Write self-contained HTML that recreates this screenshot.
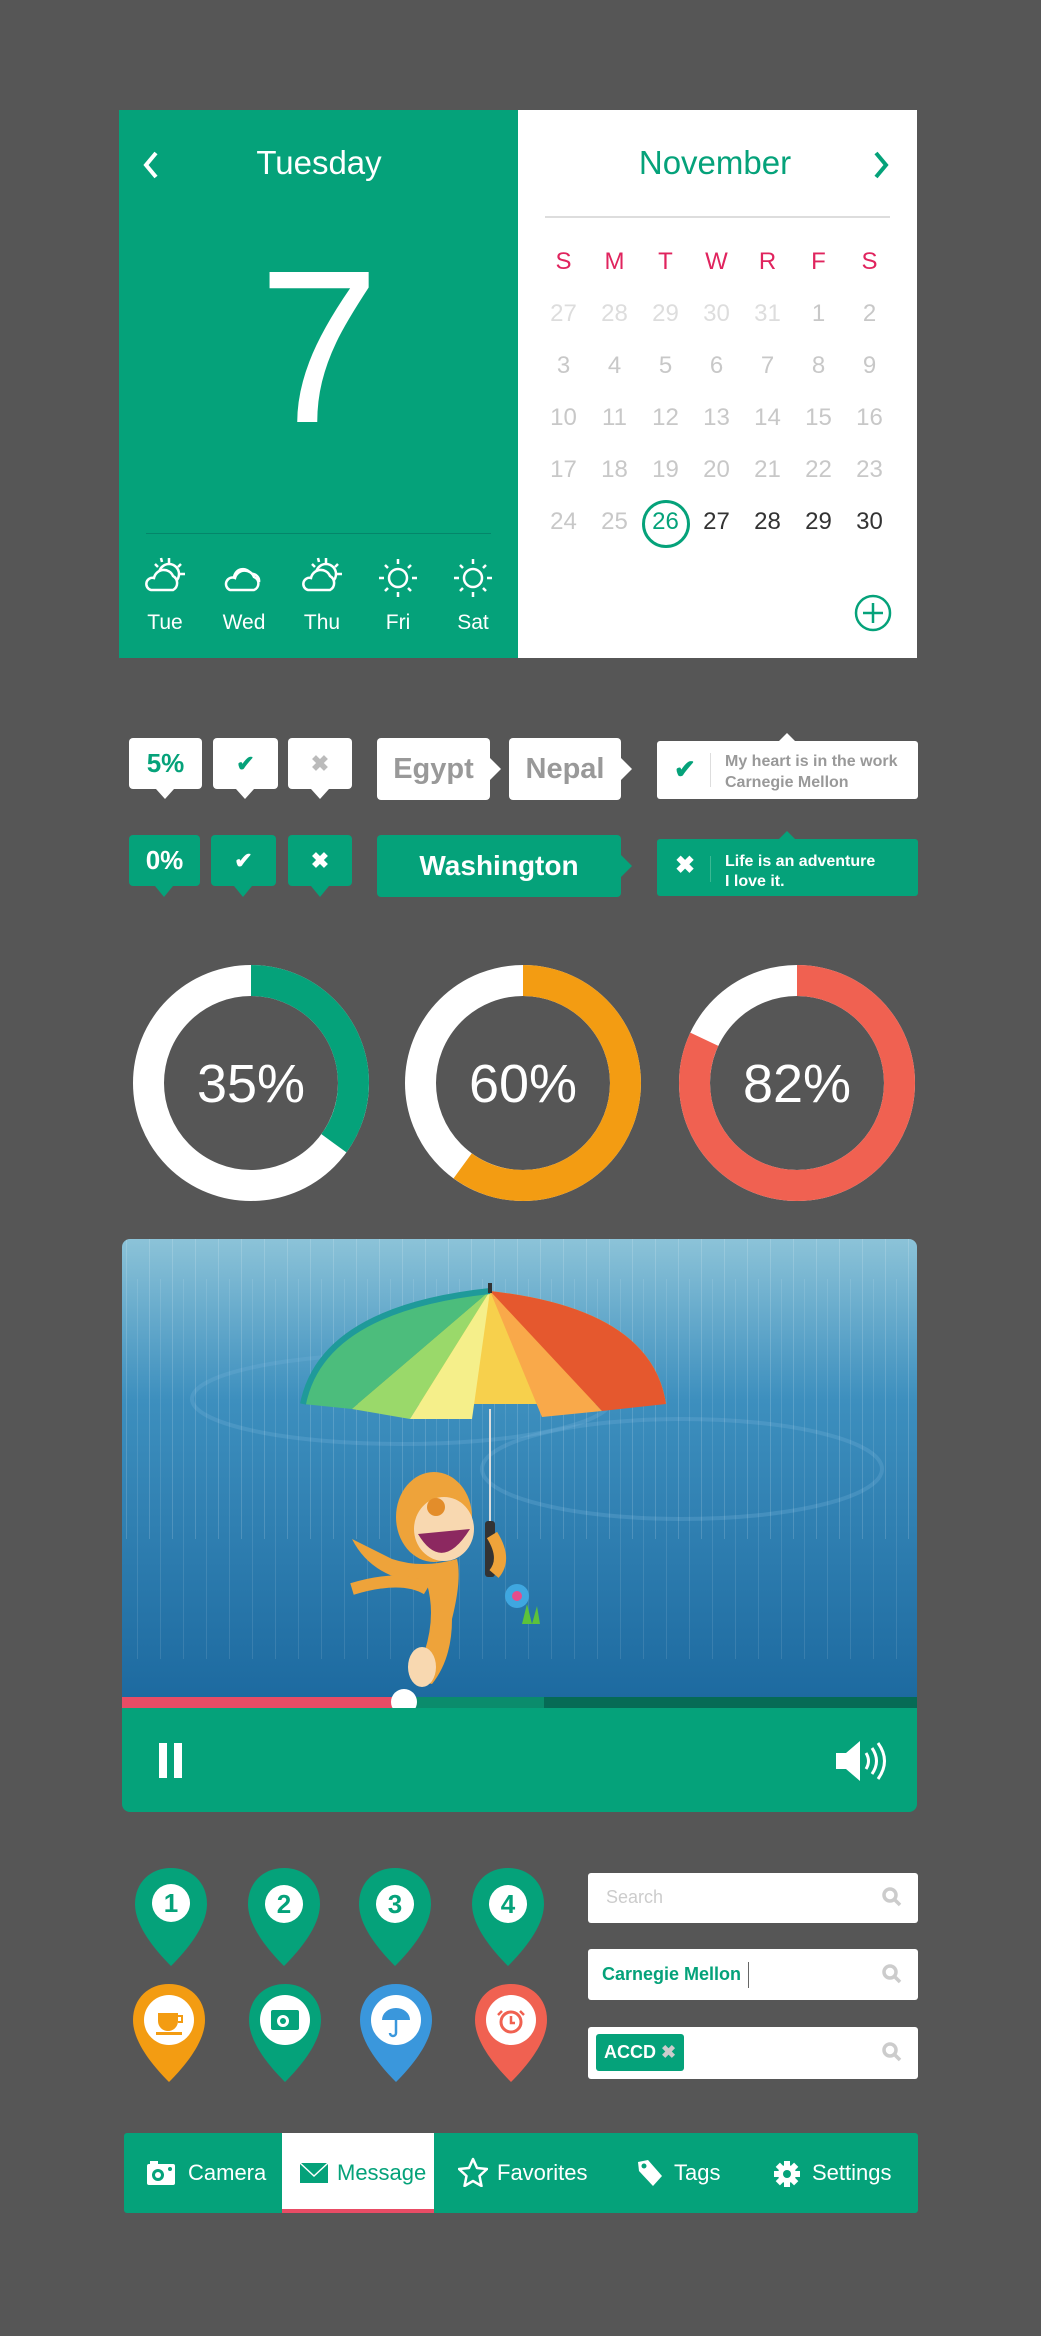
<!DOCTYPE html>
<html><head><meta charset="utf-8"><style>
*{margin:0;padding:0;box-sizing:border-box}
body{width:1041px;height:2336px;background:#565656;position:relative;overflow:hidden;font-family:"Liberation Sans",sans-serif}
.a{position:absolute}
.g{background:#05a27a}
.c{text-align:center}
.cal td{width:51px;text-align:center;height:52px;font-size:24px;color:#c8c8c8}
.tag{position:absolute;border-radius:4px;text-align:center;font-weight:bold}
.tri{position:absolute;width:0;height:0}
.srch{position:absolute;left:588px;width:330px;background:#fff;border-radius:3px}
.tab{position:absolute;top:2133px;height:80px;color:#fff;font-size:22px;line-height:80px}
</style></head><body>

<!-- Calendar -->
<div class="a g" style="left:119px;top:110px;width:399px;height:548px"></div>
<div class="a" style="left:518px;top:110px;width:399px;height:548px;background:#fff"></div>
<svg class="a" style="left:140px;top:150px" width="24" height="30"><path d="M16 3 L6 15 L16 27" stroke="#fff" stroke-width="4" fill="none"/></svg>
<div class="a c" style="left:219px;top:144px;width:200px;color:#fff;font-size:33px">Tuesday</div>
<div class="a c" style="left:219px;top:238px;width:200px;color:#fff;font-size:218px;line-height:220px">7</div>
<div class="a" style="left:146px;top:533px;width:345px;height:1px;background:#04866a"></div>
<svg class="a" style="left:140px;top:555px" width="360" height="50" fill="none" stroke="#fff" stroke-width="2.5">
 <g transform="translate(25,23)"><circle cx="4" cy="-4" r="10"/><path d="M4-20v5M16-14l-3 3M20-4h-5M-10-14l3 3M-4-20l1 4"/><path d="M-14 12h22a8 8 0 0 0 0-14a10 10 0 0 0-19 2a6 6 0 0 0-3 12z" fill="#05a27a"/></g>
 <g transform="translate(104,23)"><path d="M-10 0a9 9 0 0 1 17-4a7 7 0 0 1 8 8" /><path d="M-14 12h24a7 7 0 0 0 0-13a10 10 0 0 0-19 1a6 6 0 0 0-5 12z" fill="#05a27a"/></g>
 <g transform="translate(182,23)"><circle cx="4" cy="-4" r="10"/><path d="M4-20v5M16-14l-3 3M20-4h-5M-10-14l3 3M-4-20l1 4"/><path d="M-14 12h22a8 8 0 0 0 0-14a10 10 0 0 0-19 2a6 6 0 0 0-3 12z" fill="#05a27a"/></g>
 <g transform="translate(258,23)"><circle r="9"/><path d="M0-19v5M0 14v5M-19 0h5M14 0h5M-13-13l3 3M13-13l-3 3M-13 13l3-3M13 13l-3-3"/></g>
 <g transform="translate(333,23)"><circle r="9"/><path d="M0-19v5M0 14v5M-19 0h5M14 0h5M-13-13l3 3M13-13l-3 3M-13 13l3-3M13 13l-3-3"/></g>
</svg>
<div class="a" style="left:140px;top:611px;width:360px;color:#fff;font-size:21px">
 <span class="a c" style="left:0;width:50px">Tue</span><span class="a c" style="left:79px;width:50px">Wed</span><span class="a c" style="left:157px;width:50px">Thu</span><span class="a c" style="left:233px;width:50px">Fri</span><span class="a c" style="left:308px;width:50px">Sat</span></div>
<div class="a c" style="left:580px;top:144px;width:270px;color:#05a27a;font-size:33px">November</div>
<svg class="a" style="left:870px;top:150px" width="24" height="30"><path d="M6 3 L16 15 L6 27" stroke="#05a27a" stroke-width="4" fill="none"/></svg>
<div class="a" style="left:545px;top:216px;width:345px;height:2px;background:#ddd"></div>
<table class="a cal" style="left:538px;top:236px;border-collapse:collapse">
<tr><td style="color:#e0245e">S</td><td style="color:#e0245e">M</td><td style="color:#e0245e">T</td><td style="color:#e0245e">W</td><td style="color:#e0245e">R</td><td style="color:#e0245e">F</td><td style="color:#e0245e">S</td></tr>
<tr><td style="color:#ddd">27</td><td style="color:#ddd">28</td><td style="color:#ddd">29</td><td style="color:#ddd">30</td><td style="color:#ddd">31</td><td>1</td><td>2</td></tr>
<tr><td>3</td><td>4</td><td>5</td><td>6</td><td>7</td><td>8</td><td>9</td></tr>
<tr><td>10</td><td>11</td><td>12</td><td>13</td><td>14</td><td>15</td><td>16</td></tr>
<tr><td>17</td><td>18</td><td>19</td><td>20</td><td>21</td><td>22</td><td>23</td></tr>
<tr><td>24</td><td>25</td><td style="color:#05a27a">26</td><td style="color:#333">27</td><td style="color:#333">28</td><td style="color:#333">29</td><td style="color:#333">30</td></tr>
</table>
<div class="a" style="left:642px;top:500px;width:48px;height:48px;border:3px solid #05a27a;border-radius:50%"></div>
<svg class="a" style="left:853px;top:593px" width="40" height="40"><circle cx="20" cy="20" r="17" stroke="#05a27a" stroke-width="2.5" fill="none"/><path d="M20 10v20M10 20h20" stroke="#05a27a" stroke-width="2.5"/></svg>

<!-- Tags row 1 -->
<div class="tag" style="left:129px;top:738px;width:73px;height:51px;background:#fff;color:#05a27a;font-size:26px;line-height:51px">5%</div>
<div class="tri" style="left:156px;top:789px;border:9px solid transparent;border-top:10px solid #fff"></div>
<div class="tag" style="left:213px;top:738px;width:65px;height:51px;background:#fff;color:#05a27a;font-size:22px;line-height:51px">✔</div>
<div class="tri" style="left:236px;top:789px;border:9px solid transparent;border-top:10px solid #fff"></div>
<div class="tag" style="left:288px;top:738px;width:64px;height:51px;background:#fff;color:#bbb;font-size:22px;line-height:51px">✖</div>
<div class="tri" style="left:311px;top:789px;border:9px solid transparent;border-top:10px solid #fff"></div>
<div class="tag" style="left:377px;top:738px;width:113px;height:62px;background:#fff;color:#999;font-size:29px;line-height:62px">Egypt</div>
<div class="tri" style="left:490px;top:758px;border:11px solid transparent;border-left:11px solid #fff;border-right:0"></div>
<div class="tag" style="left:509px;top:738px;width:112px;height:62px;background:#fff;color:#999;font-size:29px;line-height:62px">Nepal</div>
<div class="tri" style="left:621px;top:758px;border:11px solid transparent;border-left:11px solid #fff;border-right:0"></div>
<div class="tag" style="left:657px;top:741px;width:261px;height:58px;background:#fff;border-radius:3px"></div>
<div class="tri" style="left:778px;top:733px;border:9px solid transparent;border-bottom:9px solid #fff;border-top:0"></div>
<div class="a" style="left:674px;top:754px;color:#05a27a;font-size:26px;font-weight:bold">✔</div>
<div class="a" style="left:710px;top:753px;width:1px;height:34px;background:#ddd"></div>
<div class="a" style="left:725px;top:751px;color:#999;font-size:16px;font-weight:bold;line-height:21px">My heart is in the work<br>Carnegie Mellon</div>
<!-- Tags row 2 -->
<div class="tag g" style="left:129px;top:835px;width:71px;height:51px;color:#fff;font-size:26px;line-height:51px">0%</div>
<div class="tri" style="left:155px;top:886px;border:9px solid transparent;border-top:11px solid #05a27a"></div>
<div class="tag g" style="left:211px;top:835px;width:65px;height:51px;color:#fff;font-size:22px;line-height:51px">✔</div>
<div class="tri" style="left:234px;top:886px;border:9px solid transparent;border-top:11px solid #05a27a"></div>
<div class="tag g" style="left:288px;top:835px;width:64px;height:51px;color:#fff;font-size:22px;line-height:51px">✖</div>
<div class="tri" style="left:311px;top:886px;border:9px solid transparent;border-top:11px solid #05a27a"></div>
<div class="tag g" style="left:377px;top:835px;width:244px;height:62px;color:#fff;font-size:28px;line-height:62px">Washington</div>
<div class="tri" style="left:621px;top:855px;border:11px solid transparent;border-left:11px solid #05a27a;border-right:0"></div>
<div class="tag g" style="left:657px;top:839px;width:261px;height:57px;border-radius:3px"></div>
<div class="tri" style="left:778px;top:831px;border:9px solid transparent;border-bottom:9px solid #05a27a;border-top:0"></div>
<div class="a" style="left:675px;top:851px;color:#fff;font-size:24px;font-weight:bold">✖</div>
<div class="a" style="left:710px;top:856px;width:1px;height:26px;background:#3bb893"></div>
<div class="a" style="left:725px;top:852px;color:#fff;font-size:16px;font-weight:bold;line-height:20px">Life is an adventure<br>I love it.</div>

<!-- Donuts -->
<svg class="a" style="left:0;top:0" width="1041" height="1230">
 <g fill="none" stroke-width="31">
  <circle cx="251" cy="1083" r="102.5" stroke="#fff"/>
  <circle cx="251" cy="1083" r="102.5" stroke="#05a27a" stroke-dasharray="225.4 1000" transform="rotate(-90 251 1083)"/>
  <circle cx="523" cy="1083" r="102.5" stroke="#fff"/>
  <circle cx="523" cy="1083" r="102.5" stroke="#f39c12" stroke-dasharray="386.4 1000" transform="rotate(-90 523 1083)"/>
  <circle cx="797" cy="1083" r="102.5" stroke="#fff"/>
  <circle cx="797" cy="1083" r="102.5" stroke="#f06151" stroke-dasharray="528 1000" transform="rotate(-90 797 1083)"/>
 </g>
 <g fill="#fff" font-family="Liberation Sans" font-size="54" text-anchor="middle">
  <text x="251" y="1102">35%</text><text x="523" y="1102">60%</text><text x="797" y="1102">82%</text>
 </g>
</svg>

<!-- Video -->
<div class="a" style="left:122px;top:1239px;width:795px;height:573px;border-radius:8px;overflow:hidden">
<svg width="795" height="460" style="display:block">
 <defs>
  <linearGradient id="bg" x1="0" y1="0" x2="0" y2="1"><stop offset="0" stop-color="#8cc3d8"/><stop offset="0.35" stop-color="#3d8fbe"/><stop offset="1" stop-color="#1d6aa0"/></linearGradient>
  <pattern id="rain" width="23" height="460" patternUnits="userSpaceOnUse"><rect x="4" y="0" width="1" height="300" fill="#fff" opacity="0.15"/><rect x="15" y="40" width="1" height="380" fill="#fff" opacity="0.1"/></pattern>
 </defs>
 <rect width="795" height="460" fill="url(#bg)"/>
 <ellipse cx="280" cy="160" rx="210" ry="45" fill="none" stroke="#6fb1d6" stroke-width="4" opacity=".3"/>
 <ellipse cx="560" cy="230" rx="200" ry="50" fill="none" stroke="#6fb1d6" stroke-width="4" opacity=".3"/>
 <rect width="795" height="460" fill="url(#rain)"/>
 <g>
  <path d="M181 165 Q200 70 368 52 Q530 70 544 165 Z" fill="#f7d04c"/>
  <path d="M181 165 Q200 70 368 52 L230 170 Z" fill="#4cbd7c"/>
  <path d="M230 170 L368 52 L288 180 Z" fill="#9ad96a"/>
  <path d="M288 180 L368 52 L350 180 Z" fill="#f5ef8a"/>
  <path d="M420 178 L368 52 L480 172 Z" fill="#f9a94a"/>
  <path d="M480 172 L368 52 Q530 70 544 165 Z" fill="#e5582e"/>
  <path d="M181 165 Q200 70 368 52" fill="none" stroke="#1f9a9a" stroke-width="6"/>
  <rect x="366" y="44" width="4" height="10" fill="#333"/>
  <rect x="367" y="170" width="2" height="120" fill="#ddd"/>
  <rect x="363" y="282" width="10" height="56" rx="3" fill="#333"/>
 </g>
 <g>
  <path d="M230 300 Q250 340 305 345 Q315 380 300 420 Q285 440 310 445 Q330 420 330 380 Q340 340 335 320 Q300 330 270 320 Z" fill="#eea33a"/>
  <path d="M230 350 Q280 335 305 350" stroke="#eea33a" stroke-width="12" fill="none"/>
  <ellipse cx="312" cy="278" rx="38" ry="45" fill="#eea33a"/>
  <ellipse cx="322" cy="290" rx="30" ry="32" fill="#f8d8b0"/>
  <path d="M296 295 Q320 335 348 290 Z" fill="#8c2860"/>
  <circle cx="314" cy="268" r="9" fill="#e38d2a"/>
  <path d="M370 296 Q385 320 372 335" stroke="#eea33a" stroke-width="12" fill="none"/>
  <ellipse cx="300" cy="428" rx="14" ry="20" fill="#f8d8b0"/>
 </g>
 <circle cx="395" cy="357" r="12" fill="#3fa7e0"/><circle cx="395" cy="357" r="5" fill="#e74c8b"/>
 <path d="M400 385 l5-20 l5 20 l5-18 l3 18 z" fill="#5cc23a"/>
</svg>
<div class="a" style="left:0;top:458px;width:795px;height:11px;background:#066b55"></div>
<div class="a" style="left:0;top:458px;width:422px;height:11px;background:#0b8c6c"></div>
<div class="a" style="left:0;top:458px;width:270px;height:11px;background:#e84c65"></div>
<div class="a" style="left:269px;top:450px;width:26px;height:26px;border-radius:50%;background:#fff"></div>
<div class="a g" style="left:0;top:469px;width:795px;height:104px"></div>
<div class="a" style="left:37px;top:504px;width:8px;height:35px;background:#fff"></div>
<div class="a" style="left:52px;top:504px;width:8px;height:35px;background:#fff"></div>
<svg class="a" style="left:710px;top:500px" width="60" height="44"><path d="M4 14h10l14-12v40l-14-12H4z" fill="#fff"/><path d="M34 14q5 8 0 16M40 9q9 13 0 26M46 4q13 18 0 36" stroke="#fff" stroke-width="3" fill="none"/></svg>
</div>

<!-- Pins -->
<svg class="a" style="left:0;top:1860px" width="580" height="230">
 <defs><path id="pin" d="M0 -36 C20 -36 36 -22 36 0 C36 22 16 46 0 62 C-16 46 -36 22 -36 0 C-36 -22 -20 -36 0 -36Z"/></defs>
 <g font-family="Liberation Sans" font-weight="bold" font-size="26" text-anchor="middle">
 <use href="#pin" x="171" y="44" fill="#05a27a"/><circle cx="171" cy="43" r="19" fill="#fff"/><text x="171" y="52" fill="#05a27a">1</text>
 <use href="#pin" x="284" y="44" fill="#05a27a"/><circle cx="284" cy="44" r="19" fill="#fff"/><text x="284" y="53" fill="#05a27a">2</text>
 <use href="#pin" x="395" y="44" fill="#05a27a"/><circle cx="395" cy="44" r="19" fill="#fff"/><text x="395" y="53" fill="#05a27a">3</text>
 <use href="#pin" x="508" y="44" fill="#05a27a"/><circle cx="508" cy="44" r="19" fill="#fff"/><text x="508" y="53" fill="#05a27a">4</text>
 </g>
 <use href="#pin" x="169" y="160" fill="#f39c12"/><circle cx="169" cy="160" r="25" fill="#fff"/>
 <path d="M158 153h20v8a10 10 0 0 1-20 0z" fill="#f39c12"/><path d="M178 156h4v6h-4" stroke="#f39c12" stroke-width="2" fill="none"/><rect x="156" y="172" width="26" height="3" fill="#f39c12"/>
 <use href="#pin" x="285" y="160" fill="#05a27a"/><circle cx="285" cy="160" r="25" fill="#fff"/>
 <rect x="271" y="150" width="28" height="20" rx="2" fill="#05a27a"/><circle cx="283" cy="161" r="6" fill="#fff"/><circle cx="283" cy="161" r="3" fill="#05a27a"/>
 <use href="#pin" x="396" y="160" fill="#3a97dc"/><circle cx="396" cy="160" r="25" fill="#fff"/>
 <path d="M382 160 a14 12 0 0 1 28 0z" fill="#3a97dc"/><path d="M396 160v13a3 3 0 0 1-6 0" stroke="#3a97dc" stroke-width="2.5" fill="none"/>
 <use href="#pin" x="511" y="160" fill="#f06151"/><circle cx="511" cy="160" r="25" fill="#fff"/>
 <circle cx="511" cy="162" r="10" stroke="#f06151" stroke-width="3" fill="none"/><path d="M511 156v7h4M502 151l-4 4M520 151l4 4" stroke="#f06151" stroke-width="2.5" fill="none"/>
</svg>

<!-- Search -->
<div class="srch" style="top:1873px;height:50px"><span class="a" style="left:18px;top:14px;color:#ccc;font-size:18px">Search</span></div>
<div class="srch" style="top:1949px;height:51px"><span class="a" style="left:14px;top:15px;color:#05a27a;font-size:18px;font-weight:bold">Carnegie Mellon</span><span class="a" style="left:160px;top:13px;width:1px;height:26px;background:#666"></span></div>
<div class="srch" style="top:2027px;height:52px"><span class="a g" style="left:8px;top:7px;width:88px;height:37px;border-radius:3px;color:#fff;font-size:18px;font-weight:bold;line-height:37px;padding-left:8px">ACCD <span style="color:#ccc">✖</span></span></div>
<svg class="a" style="left:880px;top:1885px" width="24" height="180" fill="none" stroke="#ccc" stroke-width="3.5">
 <circle cx="10" cy="10" r="6"/><path d="M14 14l6 6"/>
 <circle cx="10" cy="87" r="6"/><path d="M14 91l6 6"/>
 <circle cx="10" cy="165" r="6"/><path d="M14 169l6 6"/>
</svg>

<!-- Tab bar -->
<div class="a g" style="left:124px;top:2133px;width:794px;height:80px;border-radius:3px"></div>
<div class="a" style="left:282px;top:2133px;width:152px;height:80px;background:#fff;border-bottom:4px solid #e84c65"></div>
<svg class="a" style="left:146px;top:2160px" width="30" height="26"><rect x="1" y="4" width="28" height="21" rx="2" fill="#fff"/><rect x="4" y="1" width="8" height="4" fill="#fff"/><circle cx="12" cy="15" r="6" fill="#05a27a"/><circle cx="12" cy="15" r="3" fill="#fff"/><circle cx="24" cy="9" r="2" fill="#05a27a"/></svg>
<div class="tab" style="left:188px">Camera</div>
<svg class="a" style="left:299px;top:2162px" width="30" height="22"><rect x="1" y="1" width="28" height="20" fill="#05a27a"/><path d="M1 1l14 13L29 1" stroke="#fff" stroke-width="1.5" fill="none"/></svg>
<div class="tab" style="left:337px;color:#05a27a">Message</div>
<svg class="a" style="left:458px;top:2157px" width="30" height="30"><path d="M15 2l4 9 10 1-7.5 7 2 10L15 24l-8.5 5 2-10L1 12l10-1z" stroke="#fff" stroke-width="2.5" fill="none" stroke-linejoin="round"/></svg>
<div class="tab" style="left:497px">Favorites</div>
<svg class="a" style="left:636px;top:2158px" width="28" height="30"><path d="M2 4l10-2 14 16-9 10L3 13z" fill="#fff"/><circle cx="8" cy="8" r="2.5" fill="#05a27a"/></svg>
<div class="tab" style="left:674px">Tags</div>
<svg class="a" style="left:773px;top:2160px" width="28" height="28"><g transform="translate(14 14)" fill="#fff"><circle r="9"/><g id="t"><rect x="-3" y="-13" width="6" height="6"/></g><use href="#t" transform="rotate(45)"/><use href="#t" transform="rotate(90)"/><use href="#t" transform="rotate(135)"/><use href="#t" transform="rotate(180)"/><use href="#t" transform="rotate(225)"/><use href="#t" transform="rotate(270)"/><use href="#t" transform="rotate(315)"/><circle r="4" fill="#05a27a"/></g></svg>
<div class="tab" style="left:812px">Settings</div>
</body></html>
